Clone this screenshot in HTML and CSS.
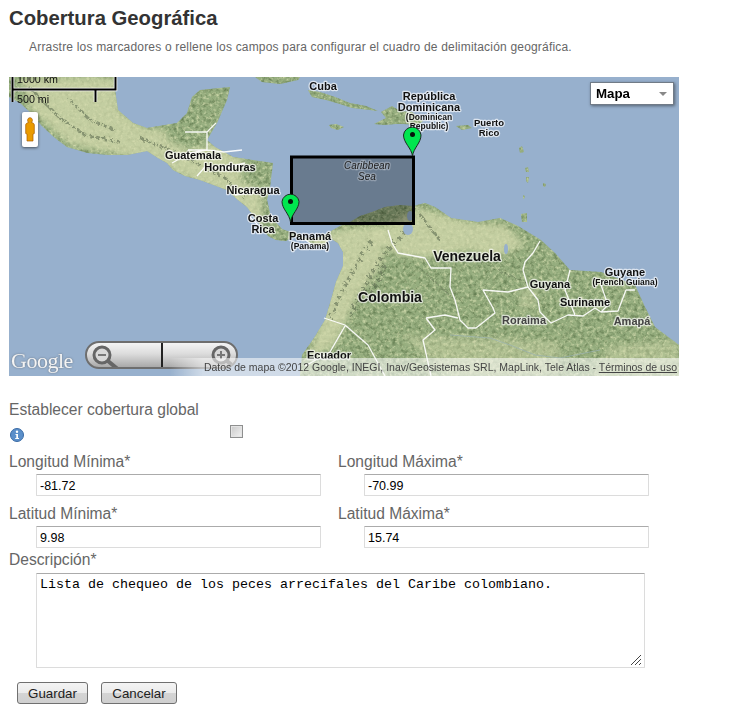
FILE: index.html
```html
<!DOCTYPE html>
<html lang="es">
<head>
<meta charset="utf-8">
<title>Cobertura Geográfica</title>
<link rel="stylesheet" href="styles.css">
</head>
<body>
<main class="page">
  <h1 class="title">Cobertura Geográfica</h1>
  <p class="intro">Arrastre los marcadores o rellene los campos para configurar el cuadro de delimitación geográfica.</p>

  <div class="map">
    <svg class="map-art" viewBox="9 77 670 299" width="670" height="299" xmlns="http://www.w3.org/2000/svg">
      <defs>
        <path id="mainland" d="M9 97L20 103 30 112 42 126 55 138 67 147 88 153 108 155 127 155 147 151 158 158 167 163 173 170 185 176 200 180 227 190 238 200 247 207 258 222 268 236 276 240 286 241 295 236 304 239 314 245 324 246 330 238 338 243 343 252 343 266 336 282 331 300 325 320 314 338 302 355 300 376 679 376 679 345 655 327 645 307 635 285 601 272 570 270 555 253 541 240 518 226 500 218 478 222 451 218 435 207 425 203 413 206 400 205 385 207 372 212 360 216 350 222 340 226 326 234 316 238 306 238 296 234 282 229 271 217 267 200 270 187 273 163 233 157 215 147 207 140 217 123 227 100 230 87 200 90 192 97 187 113 177 123 147 128 133 123 118 110 115 90 115 77 9 77Z"/>
        <filter id="terrain" x="0" y="0" width="1" height="1" color-interpolation-filters="sRGB">
          <feTurbulence type="fractalNoise" baseFrequency="0.26" numOctaves="4" seed="7" result="n"/>
          <feColorMatrix in="n" type="matrix" values="0 0 0 0 0.38  0 0 0 0 0.48  0 0 0 0 0.31  2.2 0 0 0 -1.02" result="dark"/>
          <feComposite in="dark" in2="SourceAlpha" operator="in" result="darkIn"/>
          <feTurbulence type="fractalNoise" baseFrequency="0.3" numOctaves="3" seed="21" result="m"/>
          <feColorMatrix in="m" type="matrix" values="0 0 0 0 0.80  0 0 0 0 0.84  0 0 0 0 0.66  0 2.4 0 0 -1.1" result="pale"/>
          <feComposite in="pale" in2="SourceAlpha" operator="in" result="paleIn"/>
          <feMerge>
            <feMergeNode in="SourceGraphic"/>
            <feMergeNode in="paleIn"/>
            <feMergeNode in="darkIn"/>
          </feMerge>
        </filter>
        <filter id="soft" x="-10%" y="-10%" width="120%" height="120%"><feGaussianBlur stdDeviation="3"/></filter>
        <filter id="ridge" x="-10%" y="-10%" width="120%" height="120%">
          <feTurbulence type="fractalNoise" baseFrequency="0.35" numOctaves="2" seed="4" result="r"/>
          <feDisplacementMap in="SourceGraphic" in2="r" scale="9"/>
          <feGaussianBlur stdDeviation="0.5"/>
        </filter>
        <clipPath id="landClip"><use href="#mainland"/></clipPath>
      </defs>

      <rect class="sea" x="9" y="77" width="670" height="299"/>

      <g filter="url(#terrain)">
        <use class="land" href="#mainland"/>
        <path class="land" d="M308 90L320 92 335 97 350 103 366 106 378 111 370 110 352 108 340 104 326 100 312 97Z"/>
        <path class="land" d="M255 77L300 77 298 80 280 84 262 82Z"/>
        <path class="land" d="M329 125L336 124 344 127 338 130 331 128Z"/>
        <path class="land" d="M381 112L392 106 400 111 412 112 423 121 418 125 404 124 396 124 384 125 374 124 386 118Z"/>
        <path class="land" d="M456 126L468 125 472 128 462 130Z"/>
        <path class="land" d="M521 214L527 213 527 222 522 222Z"/>
        <path class="land" d="M519 148L522 146 524 152 520 153ZM525 168L528 167 529 172 526 172ZM526 177L529 177 528 183 526 181ZM523 195L525 196 524 199 523 198ZM543 183L546 184 545 187 543 186Z"/>
      </g>

      <g clip-path="url(#landClip)">
        <g class="pale-zone" filter="url(#soft)">
          <path d="M20 77L115 77 120 110 145 128 165 130 168 140 190 150 218 142 244 160 240 180 262 190 262 225 235 210 200 185 160 165 120 155 70 145 30 110Z"/>
          <path d="M372 232L420 208 470 222 505 225 526 245 495 258 470 250 425 258 398 255 386 250Z"/>
          <path d="M310 240L345 228 380 226 384 262 356 300 335 345 308 360 326 300Z"/>
          <path class="pale-spot" d="M520 290L538 288 535 308 520 310Z"/>
          <path class="pale-spot" d="M610 345L679 340 679 376 590 376Z"/>
          <path class="pale-spot" d="M400 335L500 338 560 342 560 376 450 376Z"/>
        </g>
        <g class="ridges" filter="url(#ridge)">
          <path d="M30 88L60 118 85 135 120 142"/>
          <path d="M70 100L90 120 115 130"/>
          <path d="M140 138L175 152 200 165"/>
          <path d="M205 168L225 178 245 198"/>
          <path d="M330 318L345 285 362 255 372 240"/>
          <path d="M350 316L368 280 385 252 410 228"/>
          <path d="M368 300L386 262"/>
          <path d="M420 215L440 240"/>
          <path class="thin" d="M420 268L455 300"/>
          <path class="thin" d="M480 262L530 285"/>
        </g>
        <g class="river">
          <path d="M450 335L490 338 510 345 535 355 560 358 600 350"/>
        </g>
      </g>
      <ellipse class="sea" cx="408" cy="229" rx="5" ry="6"/>
      <ellipse class="sea" cx="410" cy="216" rx="3" ry="5"/>
      <ellipse class="sea" cx="506" cy="249" rx="2" ry="5"/>

      <g class="borders">
        <path d="M185 132L207 132 207 150 188 150M207 132L216 123M172 163L190 153 207 150 224 152 242 150M197 176L205 167 225 168 245 163M235 195L250 193 262 192M248 215L258 225M303 238L311 244"/>
        <path d="M388 230L392 243 398 253 425 258 431 268 451 268 450 287 455 300 460 320 468 328 476 328 495 313 493 308 483 290 508 292 528 287 523 270 525 262 533 253 540 241"/>
        <path d="M528 287L538 300 540 312 551 323 568 315 583 316 595 308 601 312 618 311 626 290 635 290M570 270L565 290 575 315M601 285L608 305 601 312"/>
        <path d="M426 318L435 330 423 340 431 376M426 318L445 315 458 318M324 318L345 325 368 345 385 376M305 366L330 352 345 326"/>
      </g>

      <rect class="bbox" x="291.500" y="157" width="122" height="66.500"/>

      <g class="labels">
        <text x="323" y="90">Cuba</text>
        <text x="429" y="100">República</text>
        <text x="429" y="111">Dominicana</text>
        <text class="sub" x="429" y="120">(Dominican</text>
        <text class="sub" x="429" y="129">Republic)</text>
        <text class="sub2" x="489" y="126">Puerto</text>
        <text class="sub2" x="489" y="136">Rico</text>
        <text x="193" y="159">Guatemala</text>
        <text x="230" y="171">Honduras</text>
        <text x="253" y="194">Nicaragua</text>
        <text x="263" y="222">Costa</text>
        <text x="263" y="233">Rica</text>
        <text x="310" y="240">Panamá</text>
        <text class="sub" x="310" y="249">(Panama)</text>
        <text class="big" x="467" y="261">Venezuela</text>
        <text class="big" x="390" y="302">Colombia</text>
        <text x="550" y="288">Guyana</text>
        <text x="625" y="276">Guyane</text>
        <text class="sub" x="625" y="285">(French Guiana)</text>
        <text x="585" y="306">Suriname</text>
        <text class="region" x="524" y="324">Roraima</text>
        <text class="region" x="632" y="325">Amapá</text>
        <text x="329" y="359">Ecuador</text>
        <text class="sea-label" x="367" y="169">Caribbean</text>
        <text class="sea-label" x="367" y="180">Sea</text>
      </g>

      <path class="pin" d="M290.500 222C289.500 214 282 209 282 201.500A8.600 8.600 0 0 1 299 201.500C299 209 291.500 214 290.500 222Z"/>
      <circle class="pin-dot" cx="290.500" cy="201.500" r="2.500"/>
      <path class="pin" d="M412.500 156C411.500 148 403.500 143 403.500 135A8.800 8.800 0 0 1 421 135C421 143 413.500 148 412.500 156Z"/>
      <circle class="pin-dot" cx="412.500" cy="134.500" r="2.500"/>
    </svg>

    <div class="scale">
      <span class="scale-km">1000 km</span>
      <span class="scale-mi">500 mi</span>
      <svg class="scale-bars" width="108" height="26" viewBox="0 0 108 26" xmlns="http://www.w3.org/2000/svg">
        <path class="scale-halo" d="M1.500 0V25M1.500 12.500H104.500V0M84.500 12.500V25"/>
        <path class="scale-line" d="M1.500 0V25M1.500 12.500H104.500V0M84.500 12.500V25"/>
      </svg>
    </div>

    <div class="pegman">
      <svg width="10" height="25" viewBox="0 0 10 25" xmlns="http://www.w3.org/2000/svg">
        <path class="peg" d="M5 .7C6.600.7 7.400 2 7.400 3.300 7.400 4.300 6.900 5 6.400 5.500 8 5.800 9.300 6.500 9.300 8V16.500L8 17V24H2V17L.7 16.500V8C.7 6.500 2 5.800 3.600 5.500 3.100 5 2.600 4.300 2.600 3.300 2.600 2 3.400.7 5 .7Z"/>
      </svg>
    </div>

    <div class="maptype"><span>Mapa</span><i class="caret"></i></div>

    <div class="zoom">
      <span class="zoom-half">
        <svg width="36" height="28" viewBox="0 0 36 28" xmlns="http://www.w3.org/2000/svg"><circle class="lens" cx="16" cy="12" r="8"/><path class="handle" d="M22 18L34 28"/><path class="glyph" d="M12 12H20"/></svg>
      </span>
      <span class="zoom-half zoom-in">
        <svg width="36" height="28" viewBox="0 0 36 28" xmlns="http://www.w3.org/2000/svg"><circle class="lens" cx="16" cy="12" r="8"/><path class="handle" d="M22 18L34 28"/><path class="glyph" d="M12 12H20M16 8V16"/></svg>
      </span>
    </div>

    <div class="google">Google</div>

    <div class="attrib"><span>Datos de mapa ©2012 Google, INEGI, Inav/Geosistemas SRL, MapLink, Tele Atlas - <u>Términos de uso</u></span></div>
  </div>

  <form class="form">
    <div class="global">
      <div class="label">Establecer cobertura global</div>
      <div class="global-row">
        <svg class="info" width="14" height="14" viewBox="0 0 14 14" xmlns="http://www.w3.org/2000/svg"><circle class="info-bg" cx="7" cy="7" r="6.500"/><circle class="info-fg" cx="7" cy="3.800" r="1.200"/><path class="info-fg" d="M5.500 6H8V10H9V11H5.200V10H6.300V7H5.500Z"/></svg>
        <span class="check"></span>
      </div>
    </div>

    <div class="coords">
      <div class="field">
        <label class="label">Longitud Mínima*</label>
        <input class="text" type="text" value="-81.72">
      </div>
      <div class="field">
        <label class="label">Longitud Máxima*</label>
        <input class="text" type="text" value="-70.99">
      </div>
      <div class="field">
        <label class="label">Latitud Mínima*</label>
        <input class="text" type="text" value="9.98">
      </div>
      <div class="field">
        <label class="label">Latitud Máxima*</label>
        <input class="text" type="text" value="15.74">
      </div>
    </div>

    <label class="label desc-label">Descripción*</label>
    <div class="desc-wrap">
      <textarea class="desc">Lista de chequeo de los peces arrecifales del Caribe colombiano.</textarea>
      <svg class="grip" width="12" height="12" viewBox="0 0 12 12" xmlns="http://www.w3.org/2000/svg"><path d="M1 11L11 1M5 11L11 5M9 11L11 9"/></svg>
    </div>

    <div class="actions">
      <button class="btn btn-save" type="button">Guardar</button>
      <button class="btn btn-cancel" type="button">Cancelar</button>
    </div>
  </form>
</main>
</body>
</html>
```

FILE: styles.css
```css
* { box-sizing: border-box; }

html, body {
  margin: 0;
  padding: 0;
  background: #fff;
}

body {
  font-family: "Liberation Sans", Arial, sans-serif;
  color: #666;
}

.page {
  padding: 7px 0 0 9px;
  height: 711px;
  overflow: hidden;
}

.title {
  margin: 0;
  font-size: 20.300px;
  line-height: 23px;
  font-weight: 700;
  color: #333;
}

.intro {
  margin: 10px 0 0 20px;
  font-size: 12px;
  line-height: 14px;
  color: #666;
  letter-spacing: 0.19px;
}

.map {
  position: relative;
  width: 670px;
  height: 299px;
  margin-top: 23px;
  overflow: hidden;
  background: #97b0cd;
}

.map-art { display: block; }

.sea { fill: #97b0cd; }
.land { fill: #95ad7e; }

.pale-zone path { fill: #d6dbaf; opacity: 0.72; }
.pale-zone .pale-spot { opacity: 0.4; }

.ridges path {
  fill: none;
  stroke: #55654a;
  stroke-width: 3;
  stroke-dasharray: 4 3;
  opacity: 0.55;
}
.ridges .thin { stroke-width: 1.500; opacity: 0.35; }

.river path { fill: none; stroke: #9eb4ae; stroke-width: 1; opacity: 0.8; }

.borders path {
  fill: none;
  stroke: #fff;
  stroke-width: 1.300;
  stroke-linejoin: round;
  opacity: 0.92;
}

.bbox {
  fill: rgba(0, 0, 0, 0.3);
  stroke: #000;
  stroke-width: 3;
}

.labels text {
  font-family: "Liberation Sans", Arial, sans-serif;
  font-size: 11px;
  font-weight: 700;
  text-anchor: middle;
  fill: #111;
  stroke: rgba(255, 255, 255, 0.65);
  stroke-width: 2.500;
  stroke-linejoin: round;
  paint-order: stroke;
}
.labels .sub { font-size: 8.500px; }
.labels .sub2 { font-size: 9.500px; }
.labels .big { font-size: 14px; }
.labels .region { fill: #444; }
.labels .sea-label {
  font-size: 10px;
  font-weight: 400;
  font-style: italic;
  fill: #222;
  stroke: rgba(255, 255, 255, 0.25);
}

.pin { fill: #00e64f; stroke: #1c2a20; stroke-width: 1; }
.pin-dot { fill: #06160b; }

.scale {
  position: absolute;
  left: 2px;
  top: 0;
  width: 108px;
  height: 26px;
}
.scale-km, .scale-mi {
  position: absolute;
  left: 6px;
  font-size: 10.700px;
  line-height: 11px;
  color: #111;
}
.scale-km { top: -3px; }
.scale-mi { top: 17px; }
.scale-bars { position: absolute; left: 0; top: 0; }
.scale-halo { fill: none; stroke: #fff; stroke-width: 3.500; }
.scale-line { fill: none; stroke: #000; stroke-width: 2; }

.pegman {
  position: absolute;
  left: 13px;
  top: 35px;
  width: 16px;
  height: 35px;
  display: flex;
  align-items: center;
  justify-content: center;
  background: #fff;
  border-radius: 2px;
  box-shadow: 0 1px 3px rgba(0, 0, 0, 0.55);
}
.peg { fill: #ea9b00; stroke: #a85c00; stroke-width: 0.700; }

.maptype {
  position: absolute;
  left: 581px;
  top: 5px;
  width: 84px;
  height: 23px;
  display: flex;
  align-items: center;
  justify-content: space-between;
  padding: 0 6px 0 5px;
  background: #fff;
  border: 1px solid #717b87;
  box-shadow: 1px 1px 3px rgba(0, 0, 0, 0.45);
  font-size: 13.300px;
  font-weight: 700;
  color: #000;
}
.caret {
  width: 0;
  height: 0;
  border-left: 4px solid transparent;
  border-right: 4px solid transparent;
  border-top: 4px solid #888;
}

.zoom {
  position: absolute;
  left: 76px;
  top: 264px;
  width: 153px;
  height: 28px;
  display: flex;
  border: 2px solid #6e6e6e;
  border-radius: 14px;
  overflow: hidden;
  background: linear-gradient(#f4f4f4, #dcdcdc 45%, #a9a9a9);
}
.zoom-half {
  flex: 1;
  display: flex;
  align-items: flex-start;
}
.zoom-half svg { margin-left: -1px; }
.zoom-in {
  border-left: 2px solid #222;
  justify-content: flex-end;
}
.zoom-in svg { margin-right: -5px; }
.lens { fill: #d8d8d8; stroke: #666; stroke-width: 3; }
.handle { stroke: #666; stroke-width: 4; fill: none; }
.glyph { stroke: #777; stroke-width: 2; fill: none; }

.google {
  position: absolute;
  left: 2px;
  top: 272px;
  font-family: "Liberation Serif", "Times New Roman", serif;
  font-size: 22px;
  line-height: 24px;
  letter-spacing: -0.5px;
  color: #f4f4f4;
  text-shadow: 0 0 2px rgba(60, 60, 60, 0.6);
}

.attrib {
  position: absolute;
  right: 0;
  bottom: 0;
  width: 510px;
  height: 18px;
  padding-right: 2px;
  display: flex;
  align-items: center;
  justify-content: flex-end;
  background: linear-gradient(to right, rgba(255, 255, 255, 0) 0, rgba(255, 255, 255, 0.55) 34px);
  font-size: 10.500px;
  color: #444;
  white-space: nowrap;
}

.form {
  padding-top: 25px;
}

.label {
  display: block;
  font-size: 15.600px;
  line-height: 18px;
  color: #666;
}

.global-row {
  display: flex;
  align-items: flex-start;
  height: 34px;
  padding-top: 6px;
}

.info { margin-top: 3px; margin-left: 1px; }
.info-bg { fill: #5b8fca; stroke: #3a6ba5; }
.info-fg { fill: #fff; }

.check {
  width: 13px;
  height: 13px;
  margin-left: 206px;
  border: 1px solid #8e8f8f;
  background: linear-gradient(135deg, #c9c9c9, #f2f2f2);
  box-shadow: inset 0 0 0 1px #e4e4e4;
}

.coords {
  display: grid;
  grid-template-columns: 329px 329px;
  row-gap: 9px;
}

.field { display: block; }

.text {
  display: block;
  width: 285px;
  height: 22px;
  margin: 3px 0 0 27px;
  padding: 1px 3px 0;
  border: 1px solid #dcdcdc;
  border-top-color: #ababab;
  border-radius: 1px;
  font-family: "Liberation Sans", Arial, sans-serif;
  font-size: 12.500px;
  color: #000;
  background: #fff;
}
.field:nth-child(even) .text { margin-left: 26px; }

.desc-label { margin-top: 3px; }

.desc-wrap {
  position: relative;
  width: 609px;
  height: 95px;
  margin: 4px 0 0 27px;
}

.desc {
  display: block;
  width: 100%;
  height: 100%;
  padding: 3px 3px;
  border: 1px solid #dcdcdc;
  border-top-color: #ababab;
  border-radius: 1px;
  font-family: "Liberation Mono", "Courier New", monospace;
  font-size: 13.333px;
  line-height: 15px;
  color: #000;
  background: #fff;
  resize: none;
}

.grip {
  position: absolute;
  right: 3px;
  bottom: 2px;
}
.grip path { fill: none; stroke: #444; stroke-width: 1; }

.actions {
  display: flex;
  gap: 13px;
  margin: 14px 0 0 8px;
}

.btn {
  height: 22px;
  padding: 0;
  border: 1px solid #707070;
  border-radius: 3px;
  background: linear-gradient(#f4f4f4 0, #ebebeb 50%, #d4d4d4 52%, #cfcfcf);
  font-family: "Liberation Sans", Arial, sans-serif;
  font-size: 13.333px;
  color: #222;
}
.btn-save { width: 71px; }
.btn-cancel { width: 76px; }
```
